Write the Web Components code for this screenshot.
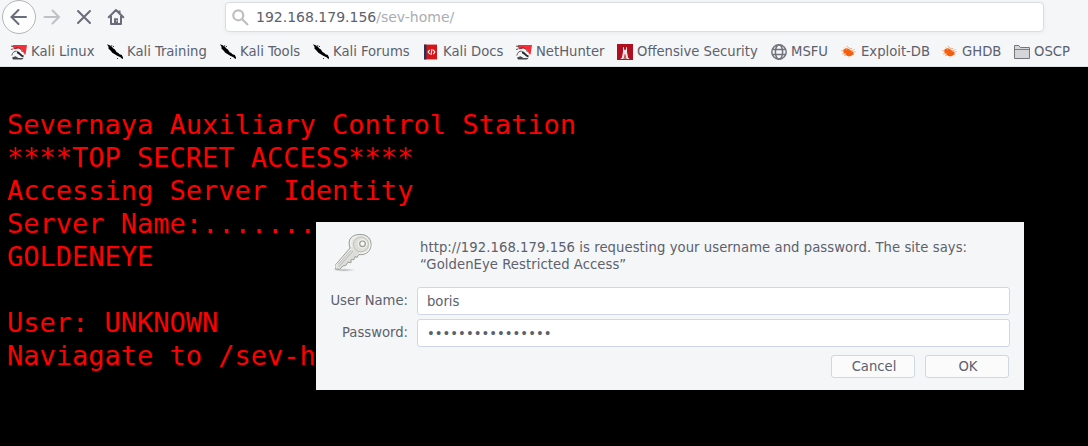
<!DOCTYPE html>
<html lang="en">
<head>
<meta charset="utf-8">
<title>Severnaya Station</title>
<style>
html,body{margin:0;height:100%;overflow:hidden;background:#000}
body{font-family:"DejaVu Sans Condensed","DejaVu Sans",sans-serif;font-stretch:condensed;font-size:14.67px;color:#5c616c}
</style>
</head>
<body>
<browser-window></browser-window>
<script>
const icons = {
dragon:`<svg width="16" height="16" viewBox="0 0 16 16"><path d="M1.500 1H16l-1.300 8.500-1.500 4L9 8 3 5Z" fill="#f82c35"/><path d="M1 8.500 3.500 5.500 7.500 4.300 11 6l1.800 3.200 2.200 3-2.500 2.600H4L.6 12.500Z" fill="#f3f5f6"/><path d="M0 2 2.800 3M0 5.500 2.500 4.800" fill="none" stroke="#555a5e"/><path d="M3.500 4.700C7 2.800 10.500 4.300 11.300 8" fill="none" stroke="#5b3035" stroke-width=".9"/><path d="M.8 11.500C1.500 8.500 3.300 6.800 5.800 7.200" fill="none" stroke="#555a5e" stroke-width="1"/><path d="M6 8.300c2.500.2 3.300 3.400 6.500 4.200" fill="none" stroke="#24282c" stroke-width="2"/><path d="m1 13.500 3.500-1.200 3 1.700h5L11 15.400H2Z" fill="#44494e"/></svg>`,
kali:`<svg width="16" height="16" viewBox="0 0 16 16" fill="#000"><path d="m0 .2 3.200 1.400.8.900 1-.2.7 1.700 2.200 1.400 1.800 2.900 1.300.5 1.500 1.500 2.300.7 1.200 2.500V15l-1.500-.8-1-.9-3.300-1.600-2.400-1.500-2.500-1.500-1.600-1.900L1.400 4.500 1.600 3Z"/><path d="M4.300 1.200h.9V2h-.9M6 2h1v.8H6M10 14.200h1v.8h-1"/></svg>`,
docs:`<svg width="16" height="16" viewBox="0 0 16 16"><path d="M1 .6h13v14.800H1z" fill="#d61519"/><path d="M1 .6h2.400v14.800H1z" fill="#263258"/><path d="M6.800 5.800 5.100 8l1.700 2M10.200 5.800 11.900 8 10.200 10.200M9 5 8 11" fill="none" stroke="#fff" stroke-width="1.100"/></svg>`,
offsec:`<svg width="16" height="16" viewBox="0 0 16 16"><path d="M0 0h16v16H0z" fill="#b10e20"/><path d="M6 3.300h1V5.800h2V3.300h1V8l1.200 6h1v1H9.500L8 9.500 6.500 15H3.800v-1h1L6 8Z" fill="#f4e5e7"/><path d="m8 9.500-.8 5.500h1.600Z" fill="#d98d95"/></svg>`,
globe:`<svg width="16" height="16" viewBox="0 0 16 16" fill="none" stroke="#70747d" stroke-width="1.500"><circle cx="8" cy="8" r="7.200"/><ellipse cx="8" cy="8" rx="3.600" ry="7.200"/><path d="M1.500 5.500h13M1.500 10.500h13"/></svg>`,
bug:`<svg width="16" height="16" viewBox="0 0 16 16"><path d="M2 6.300C4.500 3 8 4.300 9.800 6.600l2.400 1.300.7 2.600-1.800.6-1 1.200-3.800-.4-3.600-2.600Z" fill="#f2600f"/><path d="M0 6.800 3 7M1 10l4-.4M3.800 3.500 6 6M5.500 2l3 2.300 2.600.2M10 7l2.500-.8 1-1.100M12 8.200l2.600-.6M5 11l-2 .7M8 12.300l-.4 1.200" fill="none" stroke="#f6a477" stroke-width=".9"/></svg>`,
folder:`<svg width="16" height="16" viewBox="0 0 16 16"><path d="M.5 14.500v-13h4.300L6.300 3.500h9.200v11Z" fill="#d5d6da" stroke="#73767e"/><path d="M1 5.500h14.500" fill="none" stroke="#73767e" stroke-width=".9"/></svg>`,
back:`<svg width="34" height="34" viewBox="0 0 34 34" fill="none"><circle cx="17" cy="17" r="16.500" fill="#fdfdfd" stroke="#b4b4b6"/><path d="M24 17H9.800M16.500 10l-7 7 7 7" stroke="#686d79" stroke-width="2" stroke-linecap="round"/></svg>`,
forward:`<svg width="18" height="18" viewBox="0 0 18 18" fill="none" stroke="#bfc1c5" stroke-width="2" stroke-linecap="round"><path d="M1.500 9H16M9.500 2.500 16 9l-6.500 6.500"/></svg>`,
stop:`<svg width="16" height="16" viewBox="0 0 16 16" stroke="#686d79" stroke-width="2" stroke-linecap="round"><path d="m2 2 12 12M14 2 2 14"/></svg>`,
home:`<svg width="18" height="18" viewBox="0 0 18 18" fill="none" stroke="#686d79"><path d="m1.700 9.300L9 2l7.300 7.300M4 8v8h10V8" stroke-width="2" stroke-linecap="round" stroke-linejoin="round"/><path d="M12.500 2.500v3" stroke-width="2"/><path d="M7 16v-5.700h4V16Z" fill="#686d79" stroke="none"/><path d="M9.300 12h1v1.500h-1z" fill="#eee" stroke="none"/></svg>`,
search:`<svg width="17" height="17" viewBox="0 0 17 17" fill="none" stroke="#bfbfc2" stroke-width="2.200"><circle cx="6.300" cy="6.300" r="5"/><path d="m10 10 6 6"/></svg>`,
key:`<svg width="42" height="42" viewBox="0 0 42 42"><defs><linearGradient id="g" x2="1" y2="1"><stop stop-color="#f0f0ed"/><stop offset=".55" stop-color="#dcdcd8"/><stop offset="1" stop-color="#f2f2ef"/></linearGradient><radialGradient id="s"><stop stop-color="#999" stop-opacity=".7"/><stop offset="1" stop-color="#999" stop-opacity="0"/></radialGradient></defs><ellipse cx="12" cy="38" rx="12" ry="1.800" fill="url(#s)"/><path d="M18 16C15 7 20 2.500 28 2.500c8-.3 11.500 5 11 11-.5 7-7 10-12 9l-2 3-2-1-1 3-3 .3v3l-3-.7-2 3.200-3 .7-3.500 3.500-4-.5V33Z" fill="url(#g)" stroke="#9b9c98"/><path d="M19 17 4 33.500V36M20 15C16 8 22 4 28 4c7 0 10 5 10 10-1 6-6 8-11 7" fill="none" stroke="#fafaf8"/><path d="m21 19-14 15.500M19 18 6 32.500" stroke="#b7b8b3"/><circle cx="29" cy="12.300" r="7.500" fill="#deded9" stroke="#c0c1bc"/><circle cx="30.500" cy="11.800" r="2.800" fill="#f5f6f7" stroke="#999a95" stroke-width="1.200"/><circle cx="30.500" cy="11.800" r="4.200" fill="none" stroke="#f6f6f3"/></svg>`
};
function define(name, css, html){
  customElements.define(name, class extends HTMLElement{
    constructor(){
      super();
      const t=document.createElement('template');
      t.innerHTML=`<style>${css}</style>${html}`;
      this.attachShadow({mode:'open'}).append(t.content.cloneNode(true));
    }
  });
}
customElements.define('ui-icon', class extends HTMLElement{
  connectedCallback(){
    if(this.shadowRoot) return;
    this.attachShadow({mode:'open'}).innerHTML='<style>:host{display:block;flex:none;line-height:0}svg{display:block}</style>'+icons[this.getAttribute('name')];
  }
});
define('book-mark',`:host{display:flex;flex:none;align-items:center;width:var(--w);height:18px;gap:4px;white-space:nowrap}::slotted(ui-icon){align-self:flex-end;margin-bottom:-1px}`,`<slot name="icon"></slot><span><slot></slot></span>`);
define('nav-bar',`:host{display:flex;height:34px;align-items:center;padding-left:2px}
.fwd{margin-left:7px}.stop{margin-left:15px}.home{margin-left:15px}
.url{display:flex;box-sizing:border-box;width:819px;height:30px;margin-left:100px;padding-left:6px;align-items:center;background:#fff;border:1px solid #dadde6;border-radius:4px;box-shadow:0 1px 4px #0000000d}
.addr{margin-left:7px;font:14px "DejaVu Sans",sans-serif;white-space:nowrap}.addr span{color:#aaadb3}`,
`<ui-icon name="back"></ui-icon><ui-icon class="fwd" name="forward"></ui-icon><ui-icon class="stop" name="stop"></ui-icon><ui-icon class="home" name="home"></ui-icon><div class="url"><ui-icon name="search"></ui-icon><div class="addr">192.168.179.156<span>/sev-home/</span></div></div>`);
const marks=[['dragon','Kali Linux',96],['kali','Kali Training',113],['kali','Kali Tools',93],['kali','Kali Forums',110],['docs','Kali Docs',93],['dragon','NetHunter',101],['offsec','Offensive Security',154],['globe','MSFU',70],['bug','Exploit-DB',101],['bug','GHDB',72],['folder','OSCP',70]];
define('bookmark-bar',`:host{display:flex;height:33px;padding-left:11px;align-items:center;box-sizing:border-box;border-bottom:1px solid #dfe1e5}`,marks.map(([i,t,w])=>`<book-mark style="--w:${w}px"><ui-icon slot="icon" name="${i}"></ui-icon>${t}</book-mark>`).join(''));
define('station-page',`:host{display:block;box-sizing:border-box;height:379px;padding:41px 7px 0;background:#000;color:#f00;font:27px/33px "DejaVu Sans Mono",monospace}div{width:max-content;height:33px;white-space:pre}`,
['Severnaya Auxiliary Control Station','****TOP SECRET ACCESS****','Accessing Server Identity','Server Name:.......','GOLDENEYE','','User: UNKNOWN','Naviagate to /sev-h'].map(l=>`<div>${l}</div>`).join(''));
define('text-field',`:host{display:grid;grid-template-columns:92px 593px;gap:9px;height:28px;align-items:center}label{text-align:right;margin-top:-4px}div{box-sizing:border-box;height:28px;border:1px solid #cfd6e6;border-radius:3px;background:#fff;padding-left:9px;line-height:26px}`,`<label><slot name="label"></slot></label><div><slot></slot></div>`);
define('push-button',`:host{display:block;box-sizing:border-box;width:84px;height:23px;padding-left:2px;border:1px solid #cfd6e6;border-radius:3px;background:#fbfbfc;text-align:center;line-height:20px}`,`<slot></slot>`);
define('auth-dialog',`:host{position:absolute;left:316px;top:222px;width:708px;height:168px;background:#f5f6f7;box-sizing:border-box}
header{display:flex;height:65px}ui-icon{margin:10px 0 0 16px}p{margin:16px 0 0 46px;line-height:17px;white-space:nowrap;letter-spacing:.067px}
.fields{display:grid;gap:4px}footer{display:flex;justify-content:flex-end;gap:10px;padding:8px 15px 0}`,
`<header><ui-icon name="key"></ui-icon><p>http://192.168.179.156 is requesting your username and password. The site says:<br>“GoldenEye Restricted Access”</p></header><div class="fields"><text-field><span slot="label">User Name:</span>boris</text-field><text-field><span slot="label">Password:</span>••••••••••••••••</text-field></div><footer><push-button>Cancel</push-button><push-button>OK</push-button></footer>`);
define('browser-window',`:host{display:block;position:relative;width:1088px;height:446px;overflow:hidden}.chrome{height:67px;background:#f5f6f7}`,`<div class="chrome"><nav-bar></nav-bar><bookmark-bar></bookmark-bar></div><station-page></station-page><auth-dialog></auth-dialog>`);
</script>
</body>
</html>
